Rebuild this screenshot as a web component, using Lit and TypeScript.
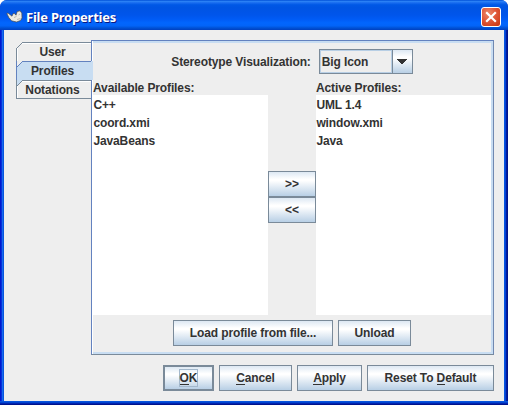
import { LitElement, html, css } from "lit";
import { customElement, property } from "lit/decorators.js";

@customElement("metal-button")
class MetalButton extends LitElement {
  @property() label = "";
  @property({ type: Number }) mnemonic = -1;
  @property({ type: Boolean, reflect: true }) primary = false;

  static styles = css`
    :host {
      display: block;
      box-sizing: border-box;
      height: 26px;
      border: 1px solid #7a8a99;
      background: linear-gradient(#dde8f3 0%, #ffffff 30%, #ffffff 36%, #b8cfe5 100%);
    }
    :host([primary]) { border-width: 2px; }
    .face { height: 100%; display: flex; align-items: center; justify-content: center; }
    .text { line-height: 16px; white-space: pre; }
    .focus { box-shadow: 0 0 0 1px #a3b8cc; }
    .key { border-bottom: 1px solid #333; display: inline-block; line-height: 11px; }
  `;

  render() {
    const m = this.mnemonic;
    const t = this.label;
    return html`<div class="face"><span class="text ${this.primary ? "focus" : ""}">${m < 0
      ? t
      : html`${t.slice(0, m)}<span class="key">${t[m]}</span>${t.slice(m + 1)}`}</span></div>`;
  }
}

@customElement("side-tab")
class SideTab extends LitElement {
  @property() label = "";
  @property({ type: Boolean, reflect: true }) selected = false;
  @property({ type: Boolean, reflect: true }) first = false;
  @property() corner = "#eeeeee";

  static styles = css`
    :host { display: grid; height: 19px; width: 75px; }
    :host([selected]) { width: 77px; position: relative; z-index: 1; }
    svg, .text { grid-area: 1 / 1; }
    svg { display: block; }
    .text { width: 73px; text-align: center; line-height: 20px; height: 19px; }
  `;

  render() {
    const line = this.selected ? "#6382bf" : "#7a8a99";
    const fill = this.selected ? "#c8ddf2" : "#eeeeee";
    const w = this.selected ? 77 : 75;
    return html`
      <svg width=${w} height="19" viewBox="0 0 ${w} 19" shape-rendering="crispEdges">
        <rect x="0" y="0" width="8" height="8" fill=${this.first ? "#eeeeee" : this.corner}></rect>
        <path d="M6 0H${w}V19H0V6Z" fill=${fill}></path>
        <path d="M6 1.5H75M1.5 6V19" stroke=${this.selected ? fill : "#ffffff"}></path>
        <path d="M0.5 ${this.first ? 6 : 0}V19M6 0.5H75" fill="none" stroke=${line}></path>
        <path d="M0.5 6.5L6.5 0.5" fill="none" stroke=${line} shape-rendering="auto"></path>
      </svg>
      <span class="text">${this.label}</span>
    `;
  }
}

@customElement("profile-list")
class ProfileList extends LitElement {
  @property() heading = "";
  @property({ attribute: false }) items: string[] = [];

  static styles = css`
    :host { display: block; width: 175px; }
    .heading { height: 16px; line-height: 18px; white-space: nowrap; }
    .list { height: 220px; background: #fff; }
    .item { height: 18px; line-height: 20px; padding-left: 0.4px; white-space: nowrap; }
  `;

  render() {
    return html`
      <div class="heading">${this.heading}</div>
      <div class="list">${this.items.map((i) => html`<div class="item">${i}</div>`)}</div>
    `;
  }
}

@customElement("app-root")
class AppRoot extends LitElement {
  static styles = css`
    :host {
      display: block;
      width: 508px;
      height: 405px;
      background: #fff;
      overflow: hidden;
      font: bold 12px/16px "Liberation Sans", Arial, sans-serif;
      letter-spacing: -0.12px;
      color: #333;
    }
    .window {
      box-sizing: border-box;
      height: 405px;
      display: flex;
      flex-direction: column;
      border-radius: 7px 7px 0 0;
      overflow: hidden;
      background:
        linear-gradient(#0855dd 0 1px, #0144d0 1px 2px, #0025b0 2px 3px, #00138c 3px) 0 100% / 100% 4px no-repeat,
        linear-gradient(90deg, #0019cf 0 1px, #0831d9 1px 2px, #166aee 2px 3px, #0855dd 3px 4px,
          #0855dd 4px calc(100% - 3px), #0441d8 calc(100% - 3px) calc(100% - 2px),
          #001ea0 calc(100% - 2px) calc(100% - 1px), #00138c calc(100% - 1px));
    }
    .title {
      height: 30px;
      flex: none;
      box-sizing: border-box;
      display: flex;
      align-items: center;
      padding: 3px 7px 0 6px;
      background: linear-gradient(#0050d8 0%, #2a80f5 5%, #1a6df0 9%, #0058e6 16%, #0054e3 26%, #0055eb 50%,
        #005bf5 64%, #0266fd 76%, #0264f8 86%, #0052d6 93%, #0040c0 100%);
    }
    .logo { display: block; width: 17px; height: 13px; }
    .caption {
      flex: 1;
      font: bold 13px/18px "Noto Sans", sans-serif;
      letter-spacing: -0.22px;
      color: #fff;
      text-shadow: 1px 1px #0a1883;
      padding-left: 3px;
    }
    .close {
      box-sizing: border-box;
      width: 20px;
      height: 20px;
      border: 1px solid #fff;
      border-radius: 3px;
      background: radial-gradient(circle at 35% 30%, #ea8a6c 0%, #e0583a 45%, #c8330c 100%);
    }
    .close svg { display: block; }
    .body {
      flex: 1;
      margin: 0 4px 4px;
      background: #eee;
      display: flex;
      flex-direction: column;
      padding-top: 10px;
      min-height: 0;
    }
    .main { display: flex; padding-left: 12px; height: 315px; flex: none; }
    .tabs { width: 75px; padding-top: 2px; }
    .tabs-end { height: 1px; background: #7a8a99; margin-top: -1px; position: relative; }
    .panel {
      box-sizing: border-box;
      width: 403px;
      border: 1px solid #7a8a99;
      border-top-color: #6382bf;
      border-left-color: #6382bf;
      border-right-color: #7088b0;
      display: flex;
      background: #fff;
    }
    .page {
      flex: 1;
      margin-left: 1px;
      border: solid #c8ddf2;
      border-width: 2px 2px 2px 0;
      background: #eee;
      display: flex;
      flex-direction: column;
      align-items: center;
    }
    .choice { display: flex; align-items: center; gap: 8px; padding-top: 6px; }
    .combo {
      box-sizing: border-box;
      width: 94px;
      height: 25px;
      border: 1px solid #7a8a99;
      display: flex;
    }
    .value {
      flex: 1;
      border: 1px solid #b8cfe5;
      padding-left: 1px;
      line-height: 23px;
      white-space: nowrap;
    }
    .arrow {
      width: 19px;
      border-left: 1px solid #7a8a99;
      background: linear-gradient(#dde8f3 0%, #ffffff 30%, #ffffff 36%, #b8cfe5 100%);
      display: flex;
      align-items: center;
      justify-content: center;
    }
    .lists { display: flex; align-self: stretch; padding-top: 5px; }
    .movers { width: 48px; padding-top: 92px; }
    .row { display: flex; gap: 5px; padding-top: 5px; }
    .actions { display: flex; justify-content: flex-end; gap: 5px; padding: 10px 10px 0 0; }
    .w160 { width: 160px; }
    .w127 { width: 127px; }
    .w73 { width: 73px; }
    .w65 { width: 65px; }
    .w51 { width: 51px; }
  `;

  render() {
    return html`
      <div class="window">
        <div class="title">
          <svg class="logo" viewBox="0 0 17 13">
            <path d="M0.8 3.5L2 3L6 6.2L7 3.8L8.2 3.2L10 5.2L11.2 1.6L14.2 0.8L15 2.2L15.8 3L16 8L14.5 10.5L10.5 12L5.5 10.8L2.8 7.5Z"
              fill="#eceae2" stroke="#4c4c4c" stroke-width="0.7"></path>
            <path d="M8 7.5L10.5 6.5M12.5 5L14 4M11 9.5L14.5 8.5" stroke="#b4b2ac" stroke-width="0.9"></path>
          </svg>
          <span class="caption">File Properties</span>
          <div class="close">
            <svg width="18" height="18" viewBox="0 0 18 18">
              <path d="M4.2 4.2L13.8 13.8M13.8 4.2L4.2 13.8" stroke="#fff" stroke-width="2.2"></path>
            </svg>
          </div>
        </div>
        <div class="body">
          <div class="main">
            <div class="tabs">
              <side-tab first label="User"></side-tab>
              <side-tab selected label="Profiles"></side-tab>
              <side-tab label="Notations" corner="#c8ddf2"></side-tab>
              <div class="tabs-end"></div>
            </div>
            <div class="panel">
              <div class="page">
                <div class="choice">
                  <span>Stereotype Visualization:</span>
                  <div class="combo">
                    <div class="value">Big Icon</div>
                    <div class="arrow">
                      <svg width="10" height="5" viewBox="0 0 10 5" shape-rendering="crispEdges">
                        <path d="M0 0H10V1H9V2H8V3H7V4H6V5H4V4H3V3H2V2H1V1H0Z" fill="#333"></path>
                      </svg>
                    </div>
                  </div>
                </div>
                <div class="lists">
                  <profile-list heading="Available Profiles:" .items=${["C++", "coord.xmi", "JavaBeans"]}></profile-list>
                  <div class="movers">
                    <metal-button label=">>"></metal-button>
                    <metal-button label="<<"></metal-button>
                  </div>
                  <profile-list heading="Active Profiles:" .items=${["UML 1.4", "window.xmi", "Java"]}></profile-list>
                </div>
                <div class="row">
                  <metal-button class="w160" label="Load profile from file..."></metal-button>
                  <metal-button class="w73" label="Unload"></metal-button>
                </div>
              </div>
            </div>
          </div>
          <div class="actions">
            <metal-button class="w51" primary label="OK" mnemonic="0"></metal-button>
            <metal-button class="w73" label="Cancel" mnemonic="0"></metal-button>
            <metal-button class="w65" label="Apply" mnemonic="0"></metal-button>
            <metal-button class="w127" label="Reset To Default" mnemonic="9"></metal-button>
          </div>
        </div>
      </div>
    `;
  }
}
